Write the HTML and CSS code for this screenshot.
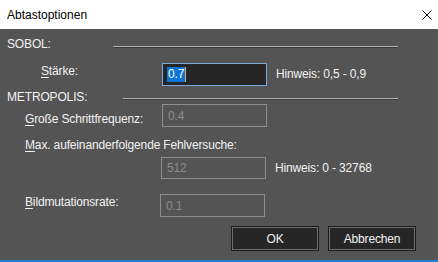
FILE: index.html
```html
<!DOCTYPE html>
<html lang="de">
<head>
    <meta charset="UTF-8">
    <meta name="viewport" content="width=device-width, initial-scale=1.0">
    <title>Abtastoptionen</title>
    <link rel="stylesheet" href="styles.css">
</head>
<body>

<div class="window">
    <div class="titlebar">
        <span class="title">Abtastoptionen</span>
        <svg class="close" width="10" height="10" viewBox="0 0 10 10">
            <path d="M0.5 0.5 L9.5 9.5 M9.5 0.5 L0.5 9.5" stroke="#000" stroke-width="1" fill="none"/>
        </svg>
    </div>

    <div class="content">
        <div class="group-head">
            <span class="group-label">SOBOL:</span>
            <div class="sep sep-sobol"></div>
        </div>
        <div class="row row-strength">
            <span class="label label-strength"><u>S</u>tärke:</span>
            <div class="field active"><span class="sel">0.7</span><span class="caret"></span></div>
            <span class="hint">Hinweis: 0,5 - 0,9</span>
        </div>

        <div class="group-head group-metro">
            <span class="group-label">METROPOLIS:</span>
            <div class="sep sep-metro"></div>
        </div>
        <div class="row row-step">
            <span class="label label-step"><u>G</u>roße Schrittfrequenz:</span>
            <div class="field">0.4</div>
        </div>
        <div class="row row-max">
            <span class="label"><u>M</u>ax. aufeinanderfolgende Fehlversuche:</span>
        </div>
        <div class="row row-tries">
            <div class="field">512</div>
            <span class="hint">Hinweis: 0 - 32768</span>
        </div>
        <div class="row row-mut">
            <span class="label label-mut"><u>B</u>ildmutationsrate:</span>
            <div class="field">0.1</div>
        </div>

        <div class="buttons">
            <div class="button">OK</div>
            <div class="button">Abbrechen</div>
        </div>
    </div>

    <div class="taskbar"></div>
</div>

</body>
</html>
```

FILE: styles.css
```css
body {
    margin: 0;
    font-family: "Liberation Sans", Arial, sans-serif;
    font-size: 12px;
    background-color: #545454;
}
.window {
    width: 438px;
    height: 262px;
    display: flex;
    flex-direction: column;
    background-color: #545454;
    color: #f2f2f2;
}
.titlebar {
    height: 29px;
    flex: 0 0 auto;
    display: flex;
    align-items: center;
    justify-content: space-between;
    padding: 0 6px 0 7px;
    background-color: #fff;
    color: #000;
}
.title {
    line-height: 16px;
}
.content {
    padding-left: 7px;
    letter-spacing: -0.15px;
}
.group-head {
    display: flex;
    align-items: flex-start;
    height: 16px;
    margin-top: 7px;
}
.group-label {
    line-height: 16px;
}
.sep {
    height: 1px;
    margin: 10px 40px 0 auto;
    background-color: #b4b4b4;
    border-bottom: 1px solid #393939;
}
.sep-sobol {
    width: 285px;
}
.sep-metro {
    width: 275px;
    margin-top: 8px;
}
.group-metro {
    height: 14px;
    margin-top: 4px;
}
.group-metro .group-label {
    line-height: 14px;
}
.row {
    display: flex;
    align-items: flex-start;
}
.label {
    line-height: 16px;
}
.label u {
    text-underline-offset: 2px;
}
.row-strength {
    margin-top: 11px;
    padding-left: 34px;
}
.label-strength {
    width: 121px;
}
.row-step {
    padding-left: 18px;
}
.label-step {
    width: 137px;
    margin-top: 7px;
}
.row-max {
    margin-top: 10px;
    padding-left: 18px;
}
.row-tries {
    margin-top: 4px;
    padding-left: 154px;
}
.row-tries .field {
    height: 22px;
}
.row-mut {
    margin-top: 15px;
    padding-left: 18px;
}
.label-mut {
    width: 135px;
}
.field {
    width: 105px;
    height: 23px;
    box-sizing: border-box;
    display: flex;
    align-items: center;
    padding-left: 5px;
    border: 1px solid #8e8e8e;
    color: #8c8c8c;
}
.field.active {
    padding-left: 4px;
    border-color: #7ea9dd;
    background-color: #262626;
    color: #fff;
}
.sel {
    background-color: #0a74d6;
    line-height: 15px;
    padding: 0 1px;
}
.caret {
    width: 1px;
    height: 15px;
    background-color: #e8b060;
}
.hint {
    margin-left: 9px;
    line-height: 22px;
}
.buttons {
    display: flex;
    justify-content: flex-end;
    gap: 9px;
    margin-top: 9px;
    padding-right: 22px;
}
.button {
    width: 88px;
    height: 25px;
    box-sizing: border-box;
    display: flex;
    align-items: center;
    justify-content: center;
    border: 1px solid #1c1c1c;
    box-shadow: inset 0 0 0 1px #6c6c6c;
    background-color: #262626;
    color: #f2f2f2;
}
.taskbar {
    margin-top: auto;
    height: 2px;
    background-color: #2a7bd0;
}
```
